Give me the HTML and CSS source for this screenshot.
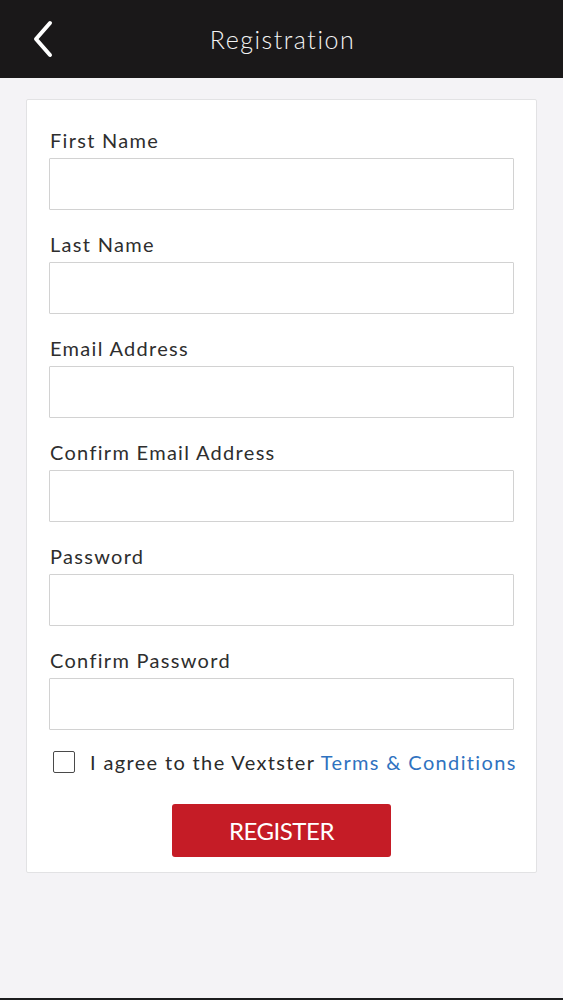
FILE: index.html
```html
<!DOCTYPE html>
<html lang="en">
<head>
  <meta charset="UTF-8" />
  <meta name="viewport" content="width=device-width, initial-scale=1" />
  <title>Registration</title>
  <link rel="stylesheet" href="styles.css">
</head>
<body>
  <div class="page">
    <!-- Top bar -->
    <header class="topbar">
      <a class="back" href="#" aria-label="Back">
        <svg width="24" height="38" viewBox="0 0 24 38">
          <path d="M19 3 L5 19 L19 35" fill="none" stroke="#fff" stroke-width="4" stroke-linecap="round" stroke-linejoin="round"/>
        </svg>
      </a>
      <h1>Registration</h1>
    </header>

    <!-- Registration form -->
    <main class="content">
      <form class="card">
        <div class="field">
          <label for="firstName">First Name</label>
          <input type="text" id="firstName" />
        </div>
        <div class="field">
          <label for="lastName">Last Name</label>
          <input type="text" id="lastName" />
        </div>
        <div class="field">
          <label for="email">Email Address</label>
          <input type="email" id="email" />
        </div>
        <div class="field">
          <label for="email2">Confirm Email Address</label>
          <input type="email" id="email2" />
        </div>
        <div class="field">
          <label for="password">Password</label>
          <input type="password" id="password" />
        </div>
        <div class="field">
          <label for="password2">Confirm Password</label>
          <input type="password" id="password2" />
        </div>
        <label class="agree">
          <span class="box"></span>
          <span>I agree to the Vextster <a href="#">Terms &amp; Conditions</a></span>
        </label>
        <button type="button" class="register">REGISTER</button>
      </form>
    </main>

    <div class="bottom-edge"></div>
  </div>
</body>
</html>
```

FILE: styles.css
```css
/* Reset and global settings */
* {
  margin: 0;
  padding: 0;
  box-sizing: border-box;
}
body {
  font-family: "Lato", "Liberation Sans", Arial, sans-serif;
  background-color: #f4f3f6;
  color: #2b2b2b;
}
.page {
  display: flex;
  flex-direction: column;
  min-height: 100vh;
}

/* Top bar */
.topbar {
  height: 78px;
  background-color: #1a1819;
  display: flex;
  align-items: center;
  justify-content: center;
  position: relative;
}
.topbar h1 {
  font-size: 25px;
  font-weight: 300;
  color: #f4f4f4;
  letter-spacing: 1.5px;
  padding-left: 2px;
}
.back {
  position: absolute;
  left: 31px;
  top: 20px;
  display: block;
  width: 24px;
  height: 38px;
}

/* Card */
.content {
  flex: 1;
  padding: 21px 26px 0;
}
.card {
  background-color: #fff;
  border: 1px solid #e2e2e4;
  border-radius: 2px;
  padding: 28px 22px 15px;
  display: flex;
  flex-direction: column;
}
.field {
  display: flex;
  flex-direction: column;
  margin-bottom: 22px;
}
.field label {
  font-size: 20px;
  line-height: 24px;
  margin-bottom: 6px;
  padding-left: 1px;
  letter-spacing: 1.3px;
  color: #2e2e2e;
}
.field input {
  height: 52px;
  border: 1px solid #d2d2d2;
  border-radius: 1px;
  padding: 0 10px;
  font-size: 18px;
  font-family: inherit;
  outline: none;
}

/* Terms row */
.agree {
  display: flex;
  align-items: center;
  gap: 15px;
  padding-left: 4px;
  margin-top: -2px;
  font-size: 20px;
  line-height: 24px;
  letter-spacing: 1.35px;
  white-space: nowrap;
}
.agree .box {
  width: 22px;
  height: 22px;
  border: 1.5px solid #4a4a4a;
  border-radius: 2px;
  flex-shrink: 0;
}
.agree a {
  color: #2f72c0;
  text-decoration: none;
}

/* Register button */
.register {
  align-self: center;
  margin-top: 30px;
  width: 219px;
  height: 53px;
  border: none;
  border-radius: 3px;
  background-color: #c51c26;
  color: #fff;
  font-family: inherit;
  font-size: 24px;
  letter-spacing: -0.5px;
  cursor: pointer;
}

.bottom-edge {
  height: 2px;
  background-color: #1c1c1e;
}
```
